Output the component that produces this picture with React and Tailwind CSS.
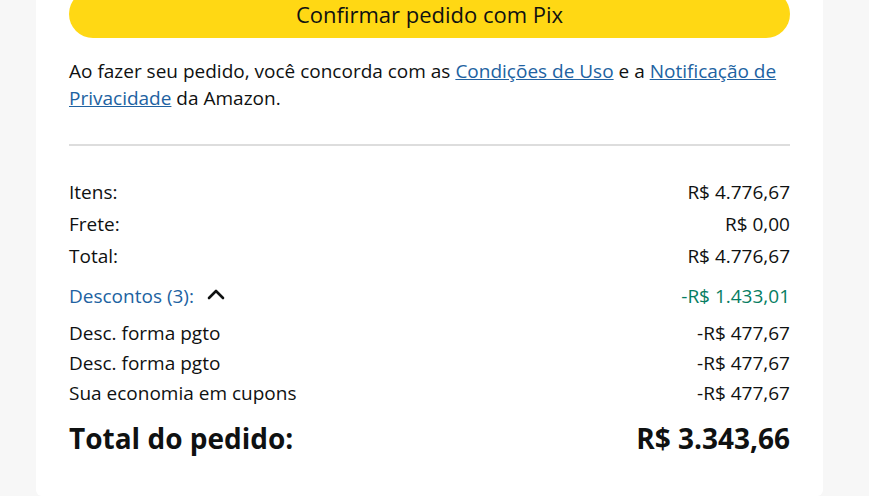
const rows = [
  { label: "Itens:", value: "R$ 4.776,67" },
  { label: "Frete:", value: "R$ 0,00" },
  { label: "Total:", value: "R$ 4.776,67" },
];

const discounts = [
  { label: "Desc. forma pgto", value: "-R$ 477,67" },
  { label: "Desc. forma pgto", value: "-R$ 477,67" },
  { label: "Sua economia em cupons", value: "-R$ 477,67" },
];

export default function App() {
  return (
    <div
      className="min-h-[500px] bg-[#f7f7f7] pl-[36px] pr-[46px] text-[#0f1111]"
      style={{ fontFamily: '"Open Sans", "Liberation Sans", sans-serif' }}
    >
      <div className="bg-white px-[33px] pb-[38px] rounded-b-md">
        {/* Pix button */}
        <button className="w-full h-12 -mt-[10px] block rounded-full bg-[#ffd814] text-[22px] leading-[48px] text-[#0f1111]">
          Confirmar pedido com Pix
        </button>

        <p className="mt-5 text-[19px] leading-[27px]">
          Ao fazer seu pedido, você concorda com as{" "}
          <a href="#" className="text-[#2162a1] underline">Condições de Uso</a> e a{" "}
          <a href="#" className="text-[#2162a1] underline">Notificação de Privacidade</a> da Amazon.
        </p>

        <div className="mt-8 border-t-2 border-[#dddddd]" />

        {/* Summary */}
        <div className="mt-[30px] text-[19px]">
          {rows.map((r) => (
            <div key={r.label} className="flex justify-between leading-[32px]">
              <span>{r.label}</span>
              <span>{r.value}</span>
            </div>
          ))}

          <div className="mt-2 flex justify-between items-center leading-[32px]">
            <span className="flex items-center gap-3 text-[#2162a1]">
              Descontos (3):
              <svg className="-mt-1" width="20" height="14" viewBox="0 0 20 14" fill="none" stroke="#0f1111" strokeWidth="2.6" strokeLinecap="round" strokeLinejoin="round">
                <polyline points="3,11 10,4 17,11" />
              </svg>
            </span>
            <span className="text-[#067d62]">-R$ 1.433,01</span>
          </div>

          <div className="mt-[6px]">
            {discounts.map((d, i) => (
              <div key={i} className="flex justify-between leading-[30px]">
                <span>{d.label}</span>
                <span>{d.value}</span>
              </div>
            ))}
          </div>

          <div className="mt-[10px] flex justify-between font-bold text-[28px] leading-[40px]">
            <span>Total do pedido:</span>
            <span>R$ 3.343,66</span>
          </div>
        </div>
      </div>
    </div>
  );
}
